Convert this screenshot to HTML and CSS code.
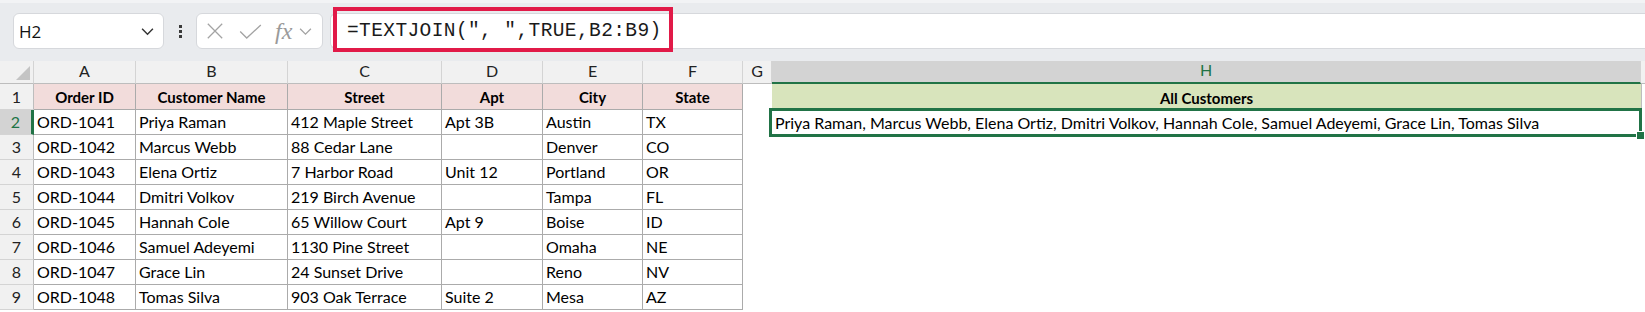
FILE: index.html
```html
<!doctype html>
<html lang="en">
    <head>
        <meta charset="UTF-8" />
        <meta name="viewport" content="width=device-width, initial-scale=1.0" />
        <title>TEXTJOIN | All Customers</title>
        <link rel="stylesheet" href="styles.css">
    </head>
    <body>
        <header class="toolbar">
            <div class="namebox">
                <span>H2</span>
                <svg viewBox="0 0 16 10" class="chev"><path d="M2 2 8 8 14 2" fill="none" stroke="#333" stroke-width="1.6"/></svg>
            </div>
            <div class="dots"><i></i><i></i><i></i></div>
            <div class="fxbox">
                <svg viewBox="0 0 20 20" class="ico"><path d="M2 2 18 18M18 2 2 18" fill="none" stroke="#a3a3a3" stroke-width="1.4"/></svg>
                <svg viewBox="0 0 24 16" class="ico check"><path d="M1 8 8 15 23 1" fill="none" stroke="#a3a3a3" stroke-width="1.4"/></svg>
                <span class="fx">fx</span>
                <svg viewBox="0 0 16 10" class="chev"><path d="M2 2 8 8 14 2" fill="none" stroke="#a3a3a3" stroke-width="1.4"/></svg>
            </div>
            <div class="formula">
                <span>=TEXTJOIN(", ",TRUE,B2:B9)</span>
                <div class="mark"></div>
            </div>
        </header>

        <section class="sheet">
            <div class="corner"><span></span></div>
            <div class="colhead">A</div>
            <div class="colhead">B</div>
            <div class="colhead">C</div>
            <div class="colhead">D</div>
            <div class="colhead">E</div>
            <div class="colhead">F</div>
            <div class="colhead">G</div>
            <div class="colhead active">H</div>
            <div class="colhead end"></div>

            <div class="rowhead">1</div>
            <div class="cell hd">Order ID</div>
            <div class="cell hd">Customer Name</div>
            <div class="cell hd">Street</div>
            <div class="cell hd">Apt</div>
            <div class="cell hd">City</div>
            <div class="cell hd">State</div>
            <div class="blank"></div>
            <div class="blank total">All Customers</div>
            <div class="blank edge"></div>

            <div class="rowhead active">2</div>
            <div class="cell">ORD-1041</div>
            <div class="cell">Priya Raman</div>
            <div class="cell">412 Maple Street</div>
            <div class="cell">Apt 3B</div>
            <div class="cell">Austin</div>
            <div class="cell">TX</div>
            <div class="blank"></div>
            <div class="blank result">Priya Raman, Marcus Webb, Elena Ortiz, Dmitri Volkov, Hannah Cole, Samuel Adeyemi, Grace Lin, Tomas Silva<b class="handle"></b></div>
            <div class="blank"></div>

            <div class="rowhead">3</div>
            <div class="cell">ORD-1042</div>
            <div class="cell">Marcus Webb</div>
            <div class="cell">88 Cedar Lane</div>
            <div class="cell"></div>
            <div class="cell">Denver</div>
            <div class="cell">CO</div>
            <div class="blank"></div><div class="blank"></div><div class="blank"></div>

            <div class="rowhead">4</div>
            <div class="cell">ORD-1043</div>
            <div class="cell">Elena Ortiz</div>
            <div class="cell">7 Harbor Road</div>
            <div class="cell">Unit 12</div>
            <div class="cell">Portland</div>
            <div class="cell">OR</div>
            <div class="blank"></div><div class="blank"></div><div class="blank"></div>

            <div class="rowhead">5</div>
            <div class="cell">ORD-1044</div>
            <div class="cell">Dmitri Volkov</div>
            <div class="cell">219 Birch Avenue</div>
            <div class="cell"></div>
            <div class="cell">Tampa</div>
            <div class="cell">FL</div>
            <div class="blank"></div><div class="blank"></div><div class="blank"></div>

            <div class="rowhead">6</div>
            <div class="cell">ORD-1045</div>
            <div class="cell">Hannah Cole</div>
            <div class="cell">65 Willow Court</div>
            <div class="cell">Apt 9</div>
            <div class="cell">Boise</div>
            <div class="cell">ID</div>
            <div class="blank"></div><div class="blank"></div><div class="blank"></div>

            <div class="rowhead">7</div>
            <div class="cell">ORD-1046</div>
            <div class="cell">Samuel Adeyemi</div>
            <div class="cell">1130 Pine Street</div>
            <div class="cell"></div>
            <div class="cell">Omaha</div>
            <div class="cell">NE</div>
            <div class="blank"></div><div class="blank"></div><div class="blank"></div>

            <div class="rowhead">8</div>
            <div class="cell">ORD-1047</div>
            <div class="cell">Grace Lin</div>
            <div class="cell">24 Sunset Drive</div>
            <div class="cell"></div>
            <div class="cell">Reno</div>
            <div class="cell">NV</div>
            <div class="blank"></div><div class="blank"></div><div class="blank"></div>

            <div class="rowhead">9</div>
            <div class="cell">ORD-1048</div>
            <div class="cell">Tomas Silva</div>
            <div class="cell">903 Oak Terrace</div>
            <div class="cell">Suite 2</div>
            <div class="cell">Mesa</div>
            <div class="cell">AZ</div>
            <div class="blank"></div><div class="blank"></div><div class="blank"></div>
        </section>
    </body>
</html>
```

FILE: styles.css
```css
body,
html {
    margin: 0;
    padding: 0;
    background-color: #fff;
}
body {
    font-family: Lato, "Liberation Sans", sans-serif;
}

.toolbar {
    display: flex;
    align-items: stretch;
    height: 61px;
    box-sizing: border-box;
    padding: 10px 0 12px 13px;
    background-color: #e9ebee;
    border-top: 3px solid #f2f3f5;
}

.namebox {
    width: 151px;
    box-sizing: border-box;
    display: flex;
    align-items: center;
    justify-content: space-between;
    padding: 0 8px 0 5px;
    background-color: #fff;
    border: 1px solid #d6d8dc;
    border-radius: 6px;
    font-family: "Open Sans", sans-serif;
    font-size: 17px;
    color: #111;
}
.chev {
    width: 15px;
    height: 9px;
}

.dots {
    width: 32px;
    display: flex;
    flex-direction: column;
    align-items: center;
    justify-content: center;
    gap: 2px;
}
.dots i {
    width: 3px;
    height: 3px;
    background-color: #3a3a3a;
}

.fxbox {
    width: 127px;
    box-sizing: border-box;
    display: flex;
    align-items: center;
    padding: 0 5px 0 9px;
    background-color: #fff;
    border: 1px solid #d6d8dc;
    border-radius: 6px;
}
.ico {
    width: 18px;
    height: 18px;
    margin-right: 14px;
}
.ico.check {
    width: 25px;
    height: 15px;
    margin-right: 12px;
}
.fx {
    font-family: "Liberation Serif", serif;
    font-style: italic;
    font-size: 24px;
    color: #9a9a9a;
    margin-right: 6px;
    line-height: 1;
}

.formula {
    position: relative;
    flex: 1;
    margin-left: 7px;
    display: flex;
    align-items: center;
    padding-left: 16px;
    background-color: #fff;
    border: 1px solid #d6d8dc;
    border-right: none;
    border-radius: 6px 0 0 6px;
    font-family: "Liberation Mono", monospace;
    font-size: 19.5px;
    letter-spacing: 0.4px;
    color: #1a1a1a;
}
.mark {
    position: absolute;
    left: 2px;
    top: -7px;
    width: 340px;
    height: 45px;
    box-sizing: border-box;
    border: 4px solid #e11a48;
}

.sheet {
    display: grid;
    grid-template-columns: 34px 102px 152px 154px 101px 100px 100px 29px 869px 1fr;
    grid-template-rows: 23px 26px repeat(8, 25px);
    font-size: 16px;
    color: #000;
}
.sheet > div {
    box-sizing: border-box;
    display: flex;
    align-items: flex-end;
    padding: 0 3px 3px;
    white-space: nowrap;
}

.corner,
.colhead {
    background-color: #f1f1f1;
    border-right: 1px solid #d4d4d4;
    border-bottom: 1px solid #bdbdbd;
    justify-content: center;
    color: #222;
}
.corner {
    position: relative;
}
.corner span {
    position: absolute;
    right: 3px;
    bottom: 3px;
    width: 0;
    height: 0;
    border-left: 14px solid transparent;
    border-bottom: 14px solid #c4c4c4;
}
.colhead.active {
    background-color: #d3d3d3;
    color: #217346;
    border-bottom: 2px solid #217346;
}
.colhead.end {
    border-right: none;
}

.rowhead {
    background-color: #f1f1f1;
    border-right: 1px solid #bdbdbd;
    border-bottom: 1px solid #d4d4d4;
    justify-content: center;
    color: #222;
}
.rowhead.active {
    background-color: #d3d3d3;
    color: #217346;
    border-right: 3px solid #217346;
}

.cell {
    border-right: 1px solid #ababab;
    border-bottom: 1px solid #ababab;
}
.cell.hd {
    background-color: #f2dcdb;
    font-weight: bold;
    font-size: 15px;
    justify-content: center;
}

.total {
    background-color: #d8e4bc;
    font-weight: bold;
    font-size: 15px;
    justify-content: center;
}
.edge {
    border-left: 1px solid #bdbdbd;
}

.result {
    position: relative;
}
.result::after {
    content: "";
    position: absolute;
    left: -3px;
    top: -2px;
    right: -1px;
    bottom: -2px;
    border: 3px solid #217346;
}
.handle {
    position: absolute;
    right: -4px;
    bottom: -5px;
    width: 7px;
    height: 7px;
    background-color: #217346;
    border: 1px solid #fff;
    z-index: 2;
}
```
